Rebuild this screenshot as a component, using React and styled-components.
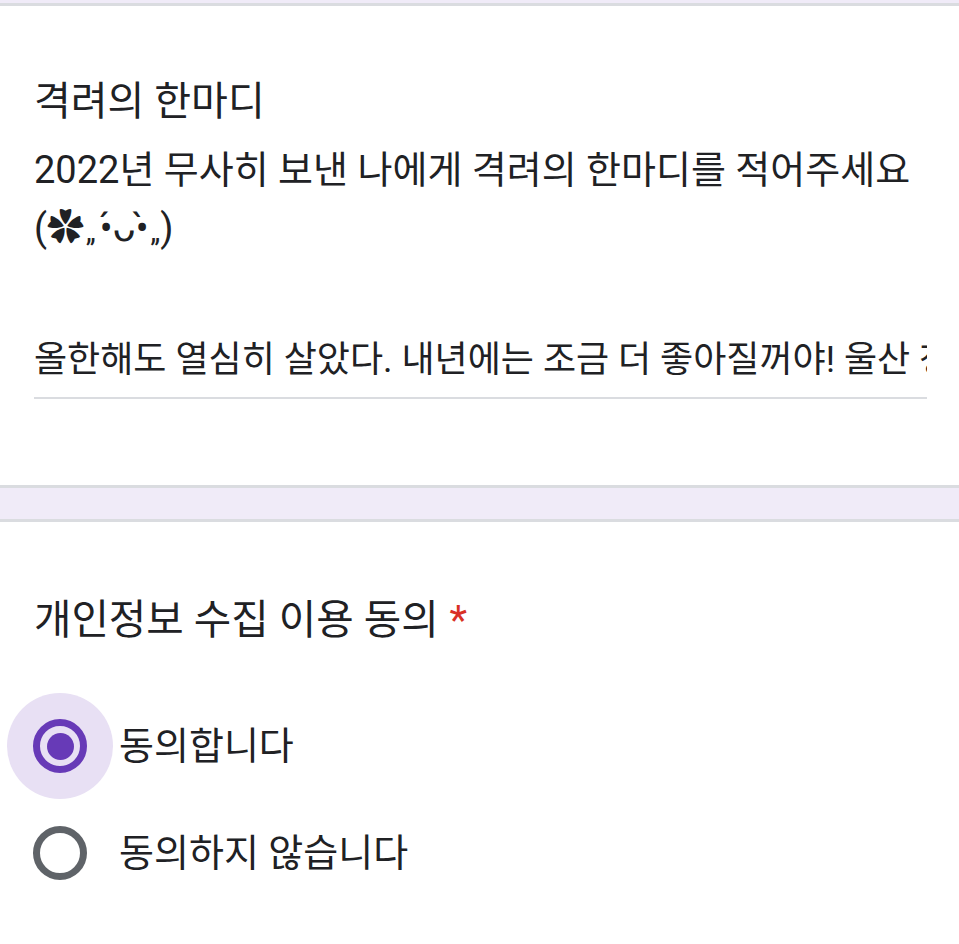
import React, { useState } from "react";
import styled, { createGlobalStyle } from "styled-components";

const GlobalStyle = createGlobalStyle`
  html, body {
    margin: 0;
    padding: 0;
    background: #ffffff;
  }
  body {
    font-family: Roboto, "Noto Sans CJK KR", "DejaVu Sans", sans-serif;
    color: #202124;
    -webkit-font-smoothing: antialiased;
  }
`;

const Page = styled.div`
  width: 959px;
  min-height: 944px;
  overflow: hidden;
  background: #fff;
`;

const Gap = styled.div`
  height: ${(p) => p.size}px;
  background: #f0ebf8;
  border-top: 3px solid #dadce0;
  border-bottom: 3px solid #dadce0;
  ${(p) => (p.top ? "border-top: none;" : "")}
`;

const Card = styled.section`
  background: #fff;
  padding: ${(p) => p.pad};
`;

const Title = styled.h2`
  margin: 0;
  font-size: ${(p) => p.size || 40}px;
  font-weight: 400;
  line-height: 48px;
  color: #202124;
`;

const Required = styled.span`
  color: #d93025;
  margin-left: 11px;
`;

const Description = styled.div`
  margin: 15px 0 0;
  font-size: 38px;
  line-height: 58px;
  color: #202124;
`;

const Line = styled.div`
  height: 58px;
  white-space: nowrap;
`;

const Flower = styled.span`
  font-family: "Noto Sans CJK KR", "DejaVu Sans", sans-serif;
  font-size: 37px;
  line-height: 0;
`;

const Blush = styled.span`
  font-size: 28px;
  line-height: 0;
  margin: 0 ${(p) => p.gap || 0}px 0 2px;
`;

const AnswerField = styled.div`
  margin-top: 79px;
  padding-bottom: 13px;
  border-bottom: 2px solid #dadce0;
  font-size: 36px;
  line-height: 48px;
  white-space: nowrap;
  overflow: hidden;
  color: #202124;
`;

const Options = styled.div`
  margin: 49px 0 0 -27px;
  display: flex;
  flex-direction: column;
  gap: 1px;
`;

const Option = styled.label`
  display: flex;
  align-items: center;
  height: 106px;
  gap: 6px;
  cursor: pointer;
`;

const Halo = styled.span`
  width: 106px;
  height: 106px;
  border-radius: 50%;
  flex: none;
  display: flex;
  align-items: center;
  justify-content: center;
  background: ${(p) => (p.checked ? "#e8e0f4" : "transparent")};
`;

const Ring = styled.span`
  box-sizing: border-box;
  width: 54px;
  height: 54px;
  border-radius: 50%;
  border: 7px solid ${(p) => (p.checked ? "#673ab7" : "#5f6368")};
  display: flex;
  align-items: center;
  justify-content: center;

  &::after {
    content: "";
    width: 27px;
    height: 27px;
    border-radius: 50%;
    background: #673ab7;
    display: ${(p) => (p.checked ? "block" : "none")};
  }
`;

const OptionText = styled.span`
  font-size: 38px;
  line-height: 48px;
  color: #202124;
`;

export default function App() {
  const [agree, setAgree] = useState("yes");
  const options = [
    { id: "yes", text: "동의합니다" },
    { id: "no", text: "동의하지 않습니다" },
  ];

  return (
    <Page>
      <GlobalStyle />
      <Gap size={3} top />
      <Card pad="72px 32px 86px 34px">
        <Title>격려의 한마디</Title>
        <Description>
          <Line>2022년 무사히 보낸 나에게 격려의 한마디를 적어주세요</Line>
          <Line>
            (<Flower>✿</Flower>
            <Blush gap={4}>„</Blush>•́ᴗ•̀<Blush>„</Blush>)
          </Line>
        </Description>
        <AnswerField>
          올한해도 열심히 살았다. 내년에는 조금 더 좋아질꺼야! 울산 청년들 화이팅!
        </AnswerField>
      </Card>
      <Gap size={31} />
      <Card pad="74px 32px 40px 34px">
        <Title size={40.7}>
          개인정보 수집 이용 동의<Required>*</Required>
        </Title>
        <Options>
          {options.map((o) => (
            <Option key={o.id} onClick={() => setAgree(o.id)}>
              <Halo checked={agree === o.id}>
                <Ring checked={agree === o.id} />
              </Halo>
              <OptionText>{o.text}</OptionText>
            </Option>
          ))}
        </Options>
      </Card>
    </Page>
  );
}
